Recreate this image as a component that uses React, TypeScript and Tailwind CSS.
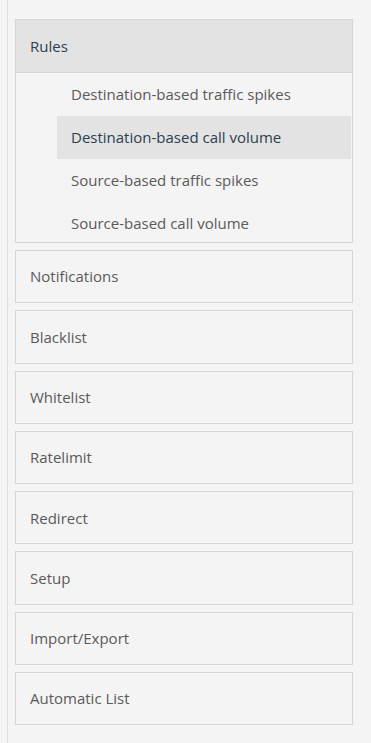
const ruleItems = [
  "Destination-based traffic spikes",
  "Destination-based call volume",
  "Source-based traffic spikes",
  "Source-based call volume",
];

const sections = [
  "Notifications",
  "Blacklist",
  "Whitelist",
  "Ratelimit",
  "Redirect",
  "Setup",
  "Import/Export",
  "Automatic List",
];

const active = "Destination-based call volume";

export default function App() {
  return (
    <div
      className="min-h-screen bg-[#f4f4f4] pl-[7px] text-[15px]"
      style={{ fontFamily: '"Open Sans", "Noto Sans", sans-serif' }}
    >
      <div className="min-h-screen border-l border-[#dedede] pl-[7px] pr-[18px] pt-[19px]">
        {/* Rules, expanded */}
        <div className="border border-[#d6d6d6]">
          <div className="flex h-[53px] items-center border-b border-[#d6d6d6] bg-[#e3e3e3] pl-[14px] text-[#2c3e50]">
            Rules
          </div>
          <div className="ml-[41px] mr-px">
            {ruleItems.map((item, i) => (
              <div
                key={item}
                className={`flex items-center pl-[14px] ${
                  i === ruleItems.length - 1 ? "h-[40px] pt-[2px]" : "h-[43px]"
                } ${
                  item === active
                    ? "bg-[#e3e3e3] text-[#2c3e50]"
                    : "text-[#5a5a5a]"
                }`}
              >
                {item}
              </div>
            ))}
          </div>
        </div>

        {/* Other sections */}
        {sections.map((s) => (
          <div
            key={s}
            className="mt-[7px] flex h-[53.3px] items-center border border-[#d6d6d6] pl-[14px] text-[#5a5a5a]"
          >
            {s}
          </div>
        ))}
      </div>
    </div>
  );
}
